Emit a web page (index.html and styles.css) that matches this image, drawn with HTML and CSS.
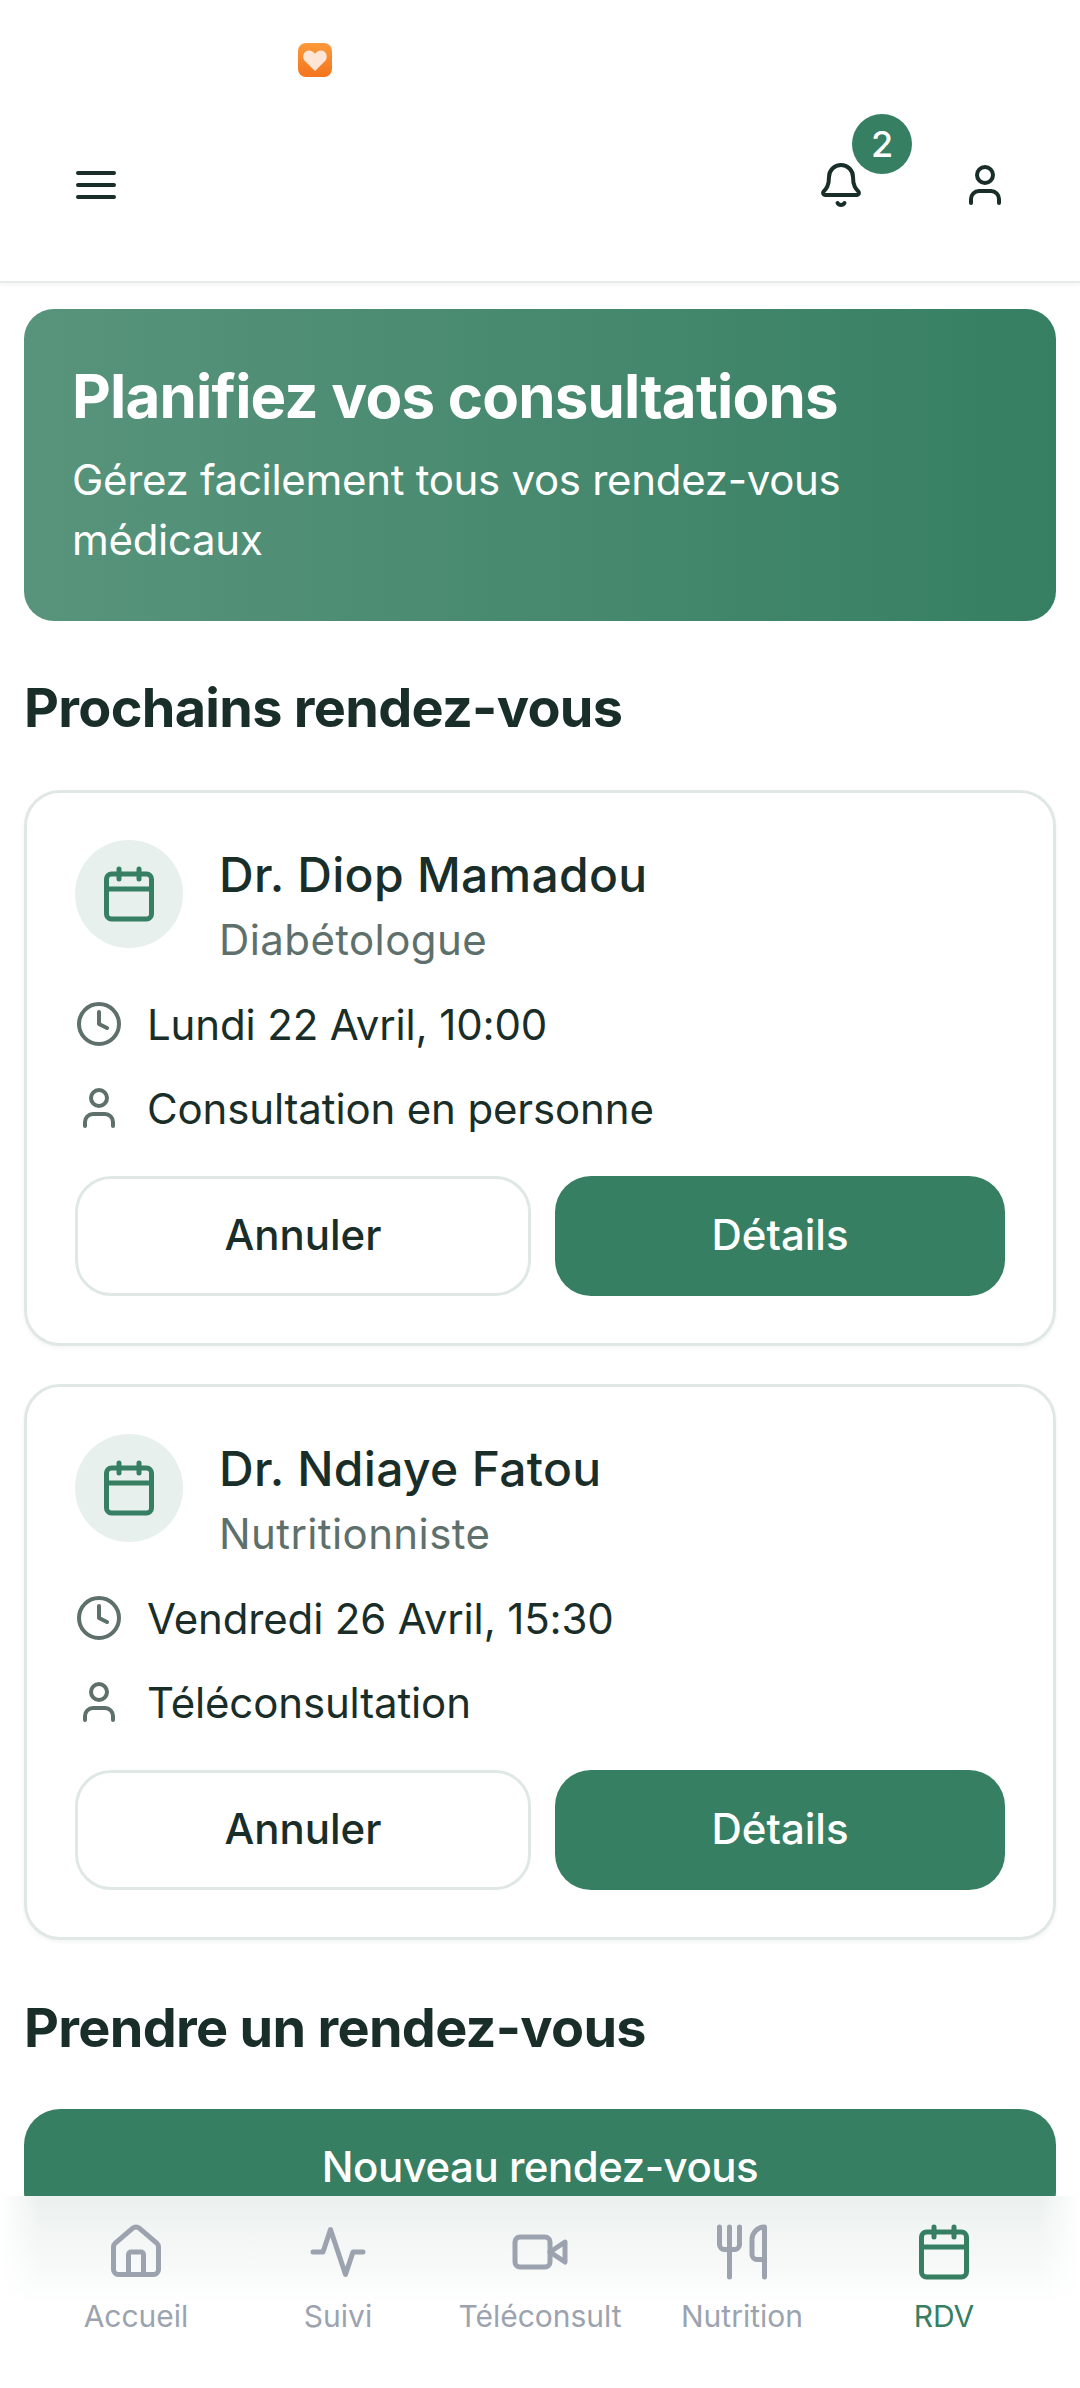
FILE: index.html
```html
<!DOCTYPE html>
<html lang="fr">
<head>
  <meta charset="UTF-8">
  <title>Rendez-vous</title>
  <link rel="stylesheet" href="styles.css">
</head>
<body>
  <svg class="sprite" xmlns="http://www.w3.org/2000/svg">
    <symbol id="i-menu" viewBox="0 0 24 24"><path d="M3 6h18M3 12h18M3 18h18"/></symbol>
    <symbol id="i-bell" viewBox="0 0 24 24"><path d="M10.268 21a2 2 0 0 0 3.464 0"/><path d="M3.262 15.326A1 1 0 0 0 4 17h16a1 1 0 0 0 .74-1.673C19.41 13.956 18 12.499 18 8A6 6 0 0 0 6 8c0 4.499-1.411 5.956-2.738 7.326"/></symbol>
    <symbol id="i-user" viewBox="0 0 24 24"><path d="M19 21v-2a4 4 0 0 0-4-4H9a4 4 0 0 0-4 4v2"/><circle cx="12" cy="7" r="4"/></symbol>
    <symbol id="i-calendar" viewBox="0 0 24 24"><rect x="3" y="4" width="18" height="18" rx="2"/><path d="M16 2v4M8 2v4M3 10h18"/></symbol>
    <symbol id="i-clock" viewBox="0 0 24 24"><circle cx="12" cy="12" r="10"/><path d="M12 6v6l4 2"/></symbol>
    <symbol id="i-home" viewBox="0 0 24 24"><path d="M15 21v-8a1 1 0 0 0-1-1h-4a1 1 0 0 0-1 1v8"/><path d="M3 10a2 2 0 0 1 .709-1.528l7-5.999a2 2 0 0 1 2.582 0l7 5.999A2 2 0 0 1 21 10v9a2 2 0 0 1-2 2H5a2 2 0 0 1-2-2z"/></symbol>
    <symbol id="i-activity" viewBox="0 0 24 24"><path d="M22 12h-4l-3 9L9 3l-3 9H2"/></symbol>
    <symbol id="i-video" viewBox="0 0 24 24"><path d="m22 8-6 4 6 4V8Z"/><rect x="2" y="6" width="14" height="12" rx="2"/></symbol>
    <symbol id="i-food" viewBox="0 0 24 24"><path d="M3 2v7c0 1.1.9 2 2 2h4a2 2 0 0 0 2-2V2M7 2v20M21 15V2a5 5 0 0 0-5 5v6c0 1.1.9 2 2 2h3Zm0 0v7"/></symbol>
  </svg>

  <div class="page">
    <header class="topbar">
      <div class="status">
        <svg class="app-logo" viewBox="0 0 34 34">
          <defs>
            <linearGradient id="logoBg" x1="0" y1="0" x2="0" y2="1">
              <stop offset="0" stop-color="#fb9a3c"/>
              <stop offset="1" stop-color="#f4741c"/>
            </linearGradient>
          </defs>
          <rect width="34" height="34" rx="8" fill="url(#logoBg)"/>
          <path d="M17 28 6.500 17.500C3.500 13.500 6 7.500 11 7.500c2.500 0 4.700 1.300 6 3.500 1.300-2.200 3.500-3.500 6-3.500 5 0 7.500 6 4.500 10z" fill="#fde6d6"/>
        </svg>
      </div>
      <div class="toolbar">
        <svg class="icon icon-top"><use href="#i-menu"/></svg>
        <div class="toolbar-right">
          <div class="bell">
            <svg class="icon icon-top"><use href="#i-bell"/></svg>
            <span class="badge">2</span>
          </div>
          <svg class="icon icon-top"><use href="#i-user"/></svg>
        </div>
      </div>
    </header>

    <main class="content">
      <section class="hero">
        <h1>Planifiez vos consultations</h1>
        <p>Gérez facilement tous vos rendez-vous médicaux</p>
      </section>

      <h2 class="section-title">Prochains rendez-vous</h2>

      <article class="card">
        <div class="card-head">
          <div class="avatar"><svg class="icon icon-avatar"><use href="#i-calendar"/></svg></div>
          <div class="doctor">
            <div class="doctor-name">Dr. Diop Mamadou</div>
            <div class="doctor-spec">Diabétologue</div>
          </div>
        </div>
        <div class="info"><svg class="icon icon-info"><use href="#i-clock"/></svg>Lundi 22 Avril, 10:00</div>
        <div class="info"><svg class="icon icon-info"><use href="#i-user"/></svg>Consultation en personne</div>
        <div class="actions">
          <button class="btn btn-outline" type="button">Annuler</button>
          <button class="btn btn-primary" type="button">Détails</button>
        </div>
      </article>

      <article class="card">
        <div class="card-head">
          <div class="avatar"><svg class="icon icon-avatar"><use href="#i-calendar"/></svg></div>
          <div class="doctor">
            <div class="doctor-name">Dr. Ndiaye Fatou</div>
            <div class="doctor-spec">Nutritionniste</div>
          </div>
        </div>
        <div class="info"><svg class="icon icon-info"><use href="#i-clock"/></svg>Vendredi 26 Avril, 15:30</div>
        <div class="info"><svg class="icon icon-info"><use href="#i-user"/></svg>Téléconsultation</div>
        <div class="actions">
          <button class="btn btn-outline" type="button">Annuler</button>
          <button class="btn btn-primary" type="button">Détails</button>
        </div>
      </article>

      <h2 class="section-title section-title-next">Prendre un rendez-vous</h2>
      <button class="btn-new" type="button">Nouveau rendez-vous</button>
    </main>

    <nav class="tabbar">
      <a class="tab"><svg class="icon icon-tab"><use href="#i-home"/></svg>Accueil</a>
      <a class="tab"><svg class="icon icon-tab"><use href="#i-activity"/></svg>Suivi</a>
      <a class="tab"><svg class="icon icon-tab"><use href="#i-video"/></svg>Téléconsult</a>
      <a class="tab"><svg class="icon icon-tab"><use href="#i-food"/></svg>Nutrition</a>
      <a class="tab tab-active"><svg class="icon icon-tab"><use href="#i-calendar"/></svg>RDV</a>
    </nav>
  </div>
</body>
</html>
```

FILE: styles.css
```css
* {
  box-sizing: border-box;
}

html, body {
  margin: 0;
  padding: 0;
}

body {
  font-family: "Inter", "Noto Sans", sans-serif;
  color: #1a2e29;
  background: #fff;
}

.sprite {
  display: none;
}

.page {
  width: 1080px;
  height: 2388px;
  display: flex;
  flex-direction: column;
  overflow: hidden;
}

.icon {
  display: block;
  flex: none;
  fill: none;
  stroke: currentColor;
  stroke-width: 2;
  stroke-linecap: round;
  stroke-linejoin: round;
}

/* header */
.topbar {
  flex: none;
  height: 283px;
  background: #fff;
  border-bottom: 2px solid #e4ebe9;
  box-shadow: 0 2px 4px rgba(26, 46, 41, 0.05);
  position: relative;
  z-index: 1;
}

.status {
  height: 132px;
  padding: 43px 0 0 298px;
}

.app-logo {
  display: block;
  width: 34px;
  height: 34px;
}

.toolbar {
  display: flex;
  justify-content: space-between;
  align-items: center;
  padding: 0 71px 0 72px;
  margin-top: 29px;
}

.toolbar-right {
  display: flex;
  align-items: center;
  gap: 96px;
}

.icon-top {
  width: 48px;
  height: 48px;
}

.bell {
  position: relative;
}

.badge {
  position: absolute;
  top: -47px;
  left: 35px;
  width: 60px;
  height: 60px;
  border-radius: 50%;
  background: #367f62;
  color: #fff;
  font-size: 36px;
  font-weight: 500;
  line-height: 60px;
  text-align: center;
}

/* content */
.content {
  flex: 1;
  min-height: 0;
  overflow: hidden;
  padding: 26px 24px 0;
}

.hero {
  height: 312px;
  padding: 47px 48px 0;
  border-radius: 30px;
  color: #fff;
  background: linear-gradient(90deg, #58947c, #367f62);
}

.hero h1 {
  margin: 0 0 14px;
  font-size: 60px;
  font-weight: 700;
  line-height: 80px;
  letter-spacing: -0.8px;
}

.hero p {
  margin: 0;
  font-size: 42px;
  line-height: 60px;
  letter-spacing: -0.3px;
}

.section-title {
  margin: 51px 0 46px;
  font-size: 54px;
  font-weight: 700;
  line-height: 72px;
  letter-spacing: -0.7px;
}

.section-title-next {
  margin: 52px 0 45px;
}

.card {
  height: 556px;
  padding: 47px 48px;
  margin-bottom: 38px;
  border: 3px solid #e0e8e6;
  border-radius: 36px;
  background: #fff;
  box-shadow: 0 2px 4px rgba(26, 46, 41, 0.05);
}

.card:last-of-type {
  margin-bottom: 0;
}

.card-head {
  display: flex;
  gap: 36px;
  margin-bottom: 24px;
}

.avatar {
  flex: none;
  width: 108px;
  height: 108px;
  border-radius: 50%;
  background: #e8f0ee;
  color: #367f62;
  display: flex;
  align-items: center;
  justify-content: center;
}

.icon-avatar {
  width: 60px;
  height: 60px;
}

.doctor {
  margin-top: 2px;
}

.doctor-name {
  font-size: 48px;
  font-weight: 500;
  line-height: 66px;
  letter-spacing: 0.3px;
}

.doctor-spec {
  margin-top: 2px;
  font-size: 42px;
  line-height: 60px;
  letter-spacing: 0.4px;
  color: #5e706b;
}

.info {
  display: flex;
  align-items: center;
  gap: 24px;
  height: 60px;
  margin-bottom: 24px;
  font-size: 42px;
  letter-spacing: -0.15px;
}

.icon-info {
  width: 48px;
  height: 48px;
  color: #5e706b;
}

.actions {
  display: flex;
  gap: 24px;
  margin-top: 38px;
}

.btn {
  box-sizing: content-box;
  flex: 1;
  padding: 0 0 2px;
  border: 0;
  border-radius: 36px;
  font-family: inherit;
  font-size: 42px;
  font-weight: 500;
  line-height: 112px;
}

.btn-outline {
  border: 3px solid #e0e8e6;
  background: #fff;
  color: #1a2e29;
}

.btn-primary {
  background: #367f62;
  color: #fff;
}

.btn-new {
  display: block;
  width: 100%;
  height: 118px;
  padding: 0 0 4px;
  border: 0;
  border-radius: 36px;
  background: #367f62;
  color: #fff;
  font-family: inherit;
  font-size: 42px;
  font-weight: 500;
  letter-spacing: -0.5px;
}

/* bottom nav */
.tabbar {
  flex: none;
  height: 192px;
  padding: 26px 35px 0;
  display: flex;
  align-items: flex-start;
  background:
    linear-gradient(90deg, #fff, rgba(255, 255, 255, 0) 40px, rgba(255, 255, 255, 0) 1040px, #fff),
    linear-gradient(180deg, #ebf1ef 0, #fbfcfc 90px, #fff 110px);
}

.tab {
  flex: 1;
  display: flex;
  flex-direction: column;
  align-items: center;
  gap: 14px;
  font-size: 30px;
  line-height: 40px;
  color: #9ca3af;
}

.tab-active {
  color: #367f62;
}

.icon-tab {
  width: 60px;
  height: 60px;
}
```
